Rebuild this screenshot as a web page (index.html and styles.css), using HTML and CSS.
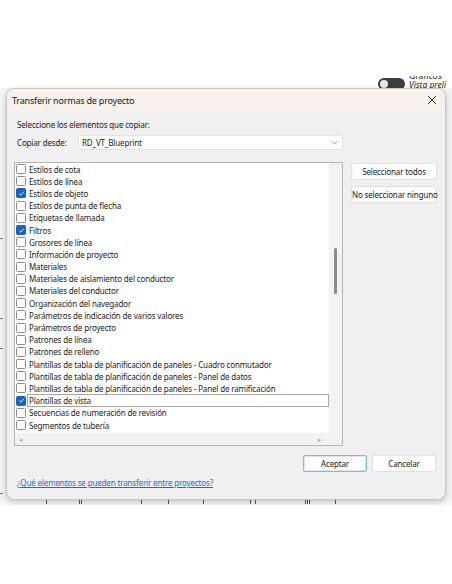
FILE: index.html
```html
<!DOCTYPE html>
<html lang="es">
<head>
    <meta charset="UTF-8">
    <meta name="viewport" content="width=device-width, initial-scale=1.0">
    <title>Transferir normas de proyecto</title>
    <link rel="stylesheet" href="styles.css">
</head>
<body>
    <div class="app">
        <!-- parte de la barra de propiedades que queda detrás del diálogo -->
        <div class="peek-strip">
            <div class="peek">
                <span class="toggle"><span class="knob"></span></span>
                <div class="peek-text">
                    <div>Gráficos</div>
                    <div class="preview">Vista preli</div>
                </div>
            </div>
        </div>
        <div class="edge-ticks"></div>

        <div class="dialog">
            <div class="titlebar">
                <span>Transferir normas de proyecto</span>
                <svg class="close" width="10" height="10" viewBox="0 0 10 10">
                    <path d="M1 1 L9 9 M9 1 L1 9" stroke="#333" stroke-width="1" fill="none"/>
                </svg>
            </div>

            <div class="content">
                <div class="prompt">Seleccione los elementos que copiar:</div>

                <div class="source-row">
                    <span class="source-label">Copiar desde:</span>
                    <div class="combo">
                        <span>RD_VT_Blueprint</span>
                        <svg width="7" height="5" viewBox="0 0 7 5">
                            <path d="M0.5 1 L3.5 4 L6.5 1" stroke="#888" stroke-width="0.8" fill="none"/>
                        </svg>
                    </div>
                </div>

                <div class="main">
                    <div class="listbox">
                        <div class="list-view">
                            <ul class="items" id="items"></ul>
                            <div class="vscroll"><div class="thumb"></div></div>
                        </div>
                        <div class="hscroll">
                            <span>&#9666;</span>
                            <span>&#9656;</span>
                        </div>
                    </div>
                    <div class="side-buttons">
                        <button class="btn">Seleccionar todos</button>
                        <button class="btn">No seleccionar ninguno</button>
                    </div>
                </div>

                <div class="footer-buttons">
                    <button class="btn btn-default">Aceptar</button>
                    <button class="btn">Cancelar</button>
                </div>

                <a class="help-link" href="#">¿Qué elementos se pueden transferir entre proyectos?</a>
            </div>
        </div>

        <div class="ruler"></div>
    </div>

    <script>
        // lista de normas que se pueden copiar
        const items = [
            ['Estilos de cota', false],
            ['Estilos de línea', false],
            ['Estilos de objeto', true],
            ['Estilos de punta de flecha', false],
            ['Etiquetas de llamada', false],
            ['Filtros', true],
            ['Grosores de línea', false],
            ['Información de proyecto', false],
            ['Materiales', false],
            ['Materiales de aislamiento del conductor', false],
            ['Materiales del conductor', false],
            ['Organización del navegador', false],
            ['Parámetros de indicación de varios valores', false],
            ['Parámetros de proyecto', false],
            ['Patrones de línea', false],
            ['Patrones de relleno', false],
            ['Plantillas de tabla de planificación de paneles - Cuadro conmutador', false],
            ['Plantillas de tabla de planificación de paneles - Panel de datos', false],
            ['Plantillas de tabla de planificación de paneles - Panel de ramificación', false],
            ['Plantillas de vista', true, true],
            ['Secuencias de numeración de revisión', false],
            ['Segmentos de tubería', false]
        ];

        const check = '<svg width="7" height="7" viewBox="0 0 7 7"><path d="M1.2 3.6 L2.8 5.2 L5.9 1.8" stroke="#fff" stroke-width="0.9" fill="none"/></svg>';

        document.getElementById('items').innerHTML = items.map(([name, checked, focused]) => `
            <li class="item">
                <span class="box ${checked ? 'checked' : ''}">${checked ? check : ''}</span>
                <span class="name ${focused ? 'focused' : ''}">${name}</span>
            </li>
        `).join('');
    </script>
</body>
</html>
```

FILE: styles.css
```css
body { margin: 0; background: #fff; font-family: "Noto Sans", "Liberation Sans", sans-serif; color: #1b1b1b; }
.app { position: relative; padding: 88px 6px 0 6px; background: linear-gradient(#fff 0 88px, #f4f4f4 88px); overflow: hidden; }

/* fondo de la aplicación */
.peek-strip { position: absolute; top: 76px; left: 0; right: 0; height: 12px; overflow: hidden; }
.peek { position: absolute; top: -5px; left: 378px; display: flex; gap: 4px; font-size: 8.5px; line-height: 9px; white-space: nowrap; }
.toggle { width: 27px; height: 12px; border-radius: 6px; background: #3e3e3e; margin-top: 7px; display: flex; align-items: center; padding-left: 2px; box-sizing: border-box; }
.knob { width: 8px; height: 8px; border-radius: 50%; background: #e8e8e8; }
.peek-text { color: #222; }
.preview { font-style: italic; text-decoration: underline; }
.edge-ticks { position: absolute; left: 0; top: 88px; width: 4px; height: 420px; background:
    linear-gradient(#777, #777) 0 150px / 3px 1px no-repeat,
    linear-gradient(#777, #777) 0 230px / 3px 1px no-repeat,
    linear-gradient(#777, #777) 0 260px / 3px 1px no-repeat,
    linear-gradient(#777, #777) 0 405px / 3px 1px no-repeat; }
.ruler { height: 5px; margin: 0 -6px; background:
    linear-gradient(#555, #555) 46px 0 / 1px 4px no-repeat,
    linear-gradient(#555, #555) 79px 0 / 1px 4px no-repeat,
    linear-gradient(#555, #555) 81px 0 / 1px 4px no-repeat,
    linear-gradient(#555, #555) 141px 0 / 1px 4px no-repeat,
    linear-gradient(#555, #555) 168px 0 / 1px 4px no-repeat,
    linear-gradient(#555, #555) 203px 0 / 1px 4px no-repeat,
    linear-gradient(#555, #555) 250px 0 / 1px 4px no-repeat,
    linear-gradient(#555, #555) 255px 0 / 1px 4px no-repeat,
    linear-gradient(#555, #555) 305px 0 / 1px 4px no-repeat,
    linear-gradient(#555, #555) 307px 0 / 1px 4px no-repeat,
    linear-gradient(#555, #555) 309px 0 / 1px 4px no-repeat,
    linear-gradient(#555, #555) 335px 0 / 1px 4px no-repeat,
    #f7f7f7; }

/* diálogo */
.dialog { position: relative; z-index: 1; width: 440px; height: 412px; box-sizing: border-box; border: 1px solid #c4c4c4; border-radius: 8px; background: #f0f0f0; overflow: hidden; box-shadow: 0 2px 6px rgba(0,0,0,0.22); }
.titlebar { height: 22px; background: #f8f0ea; display: flex; align-items: center; justify-content: space-between; padding: 0 8px 0 5px; font-size: 9px; letter-spacing: -0.2px; }
.close { display: block; }
.content { padding: 0 8px 0 7px; font-size: 8px; letter-spacing: -0.15px; }
.prompt { margin-top: 8px; line-height: 12px; padding-left: 3px; }
.source-row { display: flex; align-items: center; margin-top: 4px; padding-left: 3px; }
.source-label { width: 61px; }
.combo { width: 265px; height: 15px; box-sizing: border-box; background: #fff; border: 1px solid #e2e2e2; border-radius: 2px; display: flex; align-items: center; justify-content: space-between; padding: 0 4px 0 3px; }

.main { display: flex; gap: 8px; margin-top: 12px; }
.listbox { width: 329px; height: 284px; box-sizing: border-box; border: 1px solid #b4b4b4; background: #fff; display: flex; flex-direction: column; }
.list-view { flex: 1; display: flex; overflow: hidden; }
.items { flex: 1; list-style: none; margin: 0; padding: 0; overflow: hidden; }
.item { height: 12.19px; display: flex; align-items: center; white-space: nowrap; }
.box { width: 8px; height: 8px; margin: 0 1px 0 1px; border: 0.8px solid #8c8c8c; border-radius: 1.5px; background: #fff; display: flex; align-items: center; justify-content: center; flex: none; }
.box.checked { background: #1565c0; border-color: #1565c0; }
.box svg { display: block; }
.name { line-height: 11px; padding: 0 1px; border: 1px solid transparent; }
.name.focused { flex: 1; border-color: #a6a6a6; }
.vscroll { width: 13px; background: #f2f2f2; position: relative; }
.thumb { position: absolute; left: 5px; top: 85px; width: 2.5px; height: 46px; border-radius: 2px; background: #8a8a8a; }
.hscroll { height: 12px; background: #f2f2f2; display: flex; justify-content: space-between; align-items: center; padding: 0 20px 0 4px; font-size: 7px; color: #b0b0b0; }

.side-buttons { display: flex; flex-direction: column; gap: 6px; width: 86px; margin-top: 1px; }
.btn { font-family: inherit; font-size: 8px; letter-spacing: -0.15px; color: #1b1b1b; height: 17px; padding: 0; background: #fdfdfd; border: 1px solid #e0e0e0; border-radius: 2px; white-space: nowrap; }
.footer-buttons { display: flex; justify-content: flex-end; gap: 5px; margin-top: 9px; padding-right: 1px; }
.footer-buttons .btn { width: 64px; }
.btn-default { border-color: #8ab4df; box-shadow: inset 0 0 0 0.5px #b5d0ec; }
.help-link { display: block; margin-top: 5px; padding-left: 3px; line-height: 12px; color: #1a6ad2; text-decoration: underline; }
```
